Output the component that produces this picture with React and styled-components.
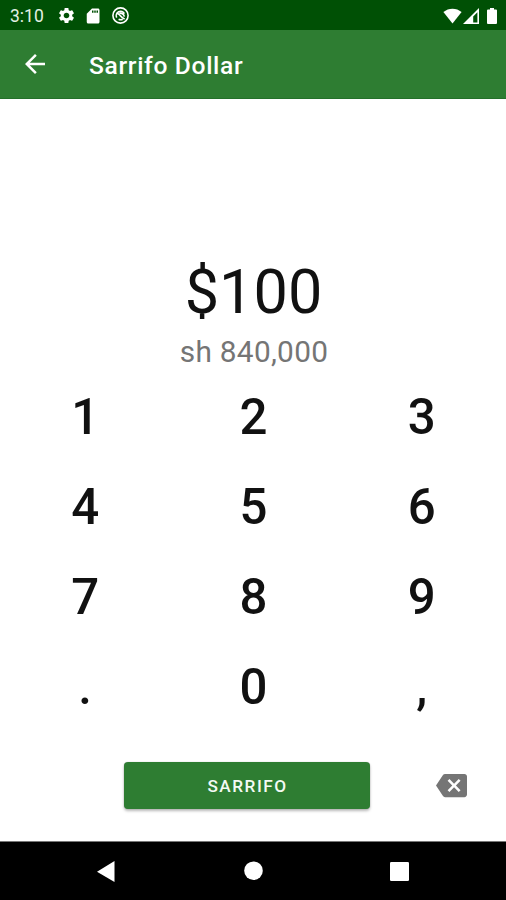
import React, { useState } from 'react';
import styled, { createGlobalStyle } from 'styled-components';

const GlobalStyle = createGlobalStyle`
    * {
        box-sizing: border-box;
    }

    body {
        margin: 0;
        background-color: #fff;
        font-family: Roboto, 'Liberation Sans', sans-serif;
    }

    button {
        padding: 0;
        border: 0;
        background: none;
        font-family: inherit;
        cursor: pointer;
    }

    svg {
        display: block;
    }
`;

const Screen = styled.div`
    display: flex;
    flex-direction: column;
    width: 506px;
    height: 900px;
    background-color: #fff;
    overflow: hidden;
`;

const StatusBar = styled.header`
    display: flex;
    align-items: center;
    justify-content: space-between;
    height: 30px;
    padding: 1px 9px 0 10px;
    background-color: #005005;
    color: #fff;
`;

const StatusGroup = styled.div`
    display: flex;
    align-items: center;
    gap: ${({ $gap }) => $gap}px;
`;

const Clock = styled.span`
    width: 37px;
    font-size: 17.5px;
    line-height: 20px;
    color: #e4f0e4;
`;

const AppBar = styled.div`
    display: flex;
    align-items: center;
    gap: 39px;
    height: 69px;
    padding: 0 20px;
    border-bottom: 1px solid #24702a;
    background-color: #2e7d32;
    color: #fff;
`;

const BackButton = styled.button`
    color: #fff;
`;

const Title = styled.h1`
    margin: 4px 0 0;
    font-size: 24.6px;
    font-weight: 500;
    line-height: 30px;
    letter-spacing: 0.66px;
`;

const Content = styled.main`
    flex: 1;
    display: flex;
    flex-direction: column;
    padding-top: 157px;
`;

const Amount = styled.p`
    margin: 0;
    padding-left: 1px;
    font-size: 61.2px;
    line-height: 72px;
    text-align: center;
    color: #111;
`;

const Converted = styled.p`
    margin: 6px 0 3px;
    padding-left: 2px;
    font-size: 29.8px;
    line-height: 35px;
    letter-spacing: 0.3px;
    text-align: center;
    color: #757575;
`;

const Keypad = styled.div`
    display: grid;
    grid-template-columns: repeat(3, 1fr);
    grid-auto-rows: 90px;
    padding-left: 1px;
`;

const Key = styled.button`
    font-size: 49.2px;
    font-weight: 500;
    line-height: 90px;
    color: #111;
`;

const Actions = styled.div`
    display: flex;
    align-items: center;
    justify-content: space-between;
    padding: 30px 39px 0 124px;
`;

const SubmitButton = styled.button`
    width: 246px;
    height: 47px;
    padding: 1px 0 0 1px;
    border-radius: 4px;
    background-color: #2e7d32;
    box-shadow: 0 2px 3px rgba(0, 0, 0, 0.28), 0 0 1px rgba(0, 0, 0, 0.3);
    font-size: 17.2px;
    font-weight: 500;
    line-height: 46px;
    letter-spacing: 1.5px;
    color: #f4faf4;
`;

const DeleteButton = styled.button`
    color: #757575;
`;

const NavBar = styled.nav`
    display: flex;
    align-items: center;
    justify-content: space-between;
    height: 59px;
    padding: 0 97px;
    border-top: 1px solid #777;
    background-color: #000;
    color: #fff;
`;

const Icon = ({ size, width, height, viewBox = '0 0 24 24', children }) => (
    <svg width={width || size} height={height || size} viewBox={viewBox} fill="currentColor">
        {children}
    </svg>
);

const KEYS = ['1', '2', '3', '4', '5', '6', '7', '8', '9', '.', '0', ','];
const RATE = 8400;

const App = () => {
    const [amount, setAmount] = useState('100');

    const converted = (Number(amount.replace(/,/g, '')) || 0) * RATE;

    const onSubmit = () => setAmount('0');

    const onPress = (key) => {
        setAmount((prev) => (prev === '0' && /\d/.test(key) ? key : prev + key));
    };

    const onDelete = () => {
        setAmount((prev) => prev.slice(0, -1) || '0');
    };

    return (
        <Screen>
            <GlobalStyle />

            <StatusBar>
                <StatusGroup $gap={9.5}>
                    <Clock>3:10</Clock>
                    <Icon size={19}>
                        <path d="M19.14 12.94c.04-.3.06-.61.06-.94 0-.32-.02-.64-.07-.94l2.03-1.58c.18-.14.23-.41.12-.61l-1.92-3.32c-.12-.22-.37-.29-.59-.22l-2.39.96c-.5-.38-1.03-.7-1.62-.94l-.36-2.54c-.04-.24-.24-.41-.48-.41h-3.84c-.24 0-.43.17-.47.41l-.36 2.54c-.59.24-1.13.57-1.62.94l-2.39-.96c-.22-.08-.47 0-.59.22L2.74 8.87c-.12.21-.08.47.12.61l2.03 1.58c-.05.3-.09.63-.09.94s.02.64.07.94l-2.03 1.58c-.18.14-.23.41-.12.61l1.92 3.32c.12.22.37.29.59.22l2.39-.96c.5.38 1.03.7 1.62.94l.36 2.54c.05.24.24.41.48.41h3.84c.24 0 .44-.17.47-.41l.36-2.54c.59-.24 1.13-.56 1.62-.94l2.39.96c.22.08.47 0 .59-.22l1.92-3.32c.12-.22.07-.47-.12-.61l-2.01-1.58zM12 15.6c-1.98 0-3.6-1.62-3.6-3.6s1.62-3.6 3.6-3.6 3.6 1.62 3.6 3.6-1.62 3.6-3.6 3.6z" />
                    </Icon>
                    <Icon width={17} height={18} viewBox="1 0 22 24">
                        <path d="M18 2h-8L3 9v11c0 1.1.9 2 2 2h13c1.1 0 2-.9 2-2V4c0-1.1-.9-2-2-2zm-6 5.5h-2V4.5h2v3zm3 0h-2V4.5h2v3zm3 0h-2V4.5h2v3z" />
                    </Icon>
                    <Icon size={17} viewBox="0 0 17 17">
                        <circle cx="8.5" cy="8.5" r="7.6" fill="none" stroke="currentColor" strokeWidth="1.6" />
                        <path
                            d="M4.7 10.6A4.3 4.3 0 0 1 12.4 6.7M4.3 6.2C6.6 6 7.2 7.7 8.7 9.1S11.4 11.3 12.6 12.2M6.6 12.3C8 13 9.5 12.9 10.7 12.2M7.4 6.2C9.6 6 11.8 7.4 12.3 9.6"
                            fill="none"
                            stroke="currentColor"
                            strokeWidth="1.6"
                        />
                    </Icon>
                </StatusGroup>
                <StatusGroup $gap={1}>
                    <Icon width={19} height={16} viewBox="0 0 19 16">
                        <path d="M9.5 15.4.4 4.1C5.6-.4 13.4-.4 18.6 4.1Z" />
                    </Icon>
                    <Icon width={16} height={16} viewBox="0 0 16 16">
                        <path fillRule="evenodd" d="M0 16 16 0V16ZM10.2 14.6H14.4V4.3L10.2 8.5Z" />
                    </Icon>
                    <Icon width={17} height={16} viewBox="0 0 17 16">
                        <path d="M8 1.6h2V0h4v1.6h2q1 0 1 1V15q0 1-1 1h-8q-1 0-1-1V2.6q0-1 1-1Z" />
                    </Icon>
                </StatusGroup>
            </StatusBar>

            <AppBar>
                <BackButton aria-label="Back">
                    <Icon size={30}>
                        <path d="M20 11H7.83l5.59-5.59L12 4l-8 8 8 8 1.41-1.41L7.83 13H20v-2z" />
                    </Icon>
                </BackButton>
                <Title>Sarrifo Dollar</Title>
            </AppBar>

            <Content>
                <Amount>${amount}</Amount>
                <Converted>sh {converted.toLocaleString('en-US')}</Converted>

                <Keypad>
                    {KEYS.map((key) => (
                        <Key key={key} onClick={() => onPress(key)}>
                            {key}
                        </Key>
                    ))}
                </Keypad>

                <Actions>
                    <SubmitButton onClick={onSubmit}>SARRIFO</SubmitButton>
                    <DeleteButton aria-label="Delete" onClick={onDelete}>
                        <Icon size={31}>
                            <path d="M22 3H7c-.69 0-1.23.35-1.59.88L0 12l5.41 8.11c.36.53.9.89 1.59.89h15c1.1 0 2-.9 2-2V5c0-1.1-.9-2-2-2zm-3 12.59L17.59 17 14 13.41 10.41 17 9 15.59 12.59 12 9 8.41 10.41 7 14 10.59 17.59 7 19 8.41 15.41 12 19 15.59z" />
                        </Icon>
                    </DeleteButton>
                </Actions>
            </Content>

            <NavBar>
                <Icon width={18} height={21} viewBox="0 0 18 21">
                    <path d="M17.5 0V21L0 10.7Z" />
                </Icon>
                <Icon size={20} viewBox="0 0 20 20">
                    <circle cx="10.5" cy="9.7" r="9.3" />
                </Icon>
                <Icon size={19} viewBox="0 0 19 19">
                    <rect width="19" height="19" rx="1.3" />
                </Icon>
            </NavBar>
        </Screen>
    );
};

export default App;
